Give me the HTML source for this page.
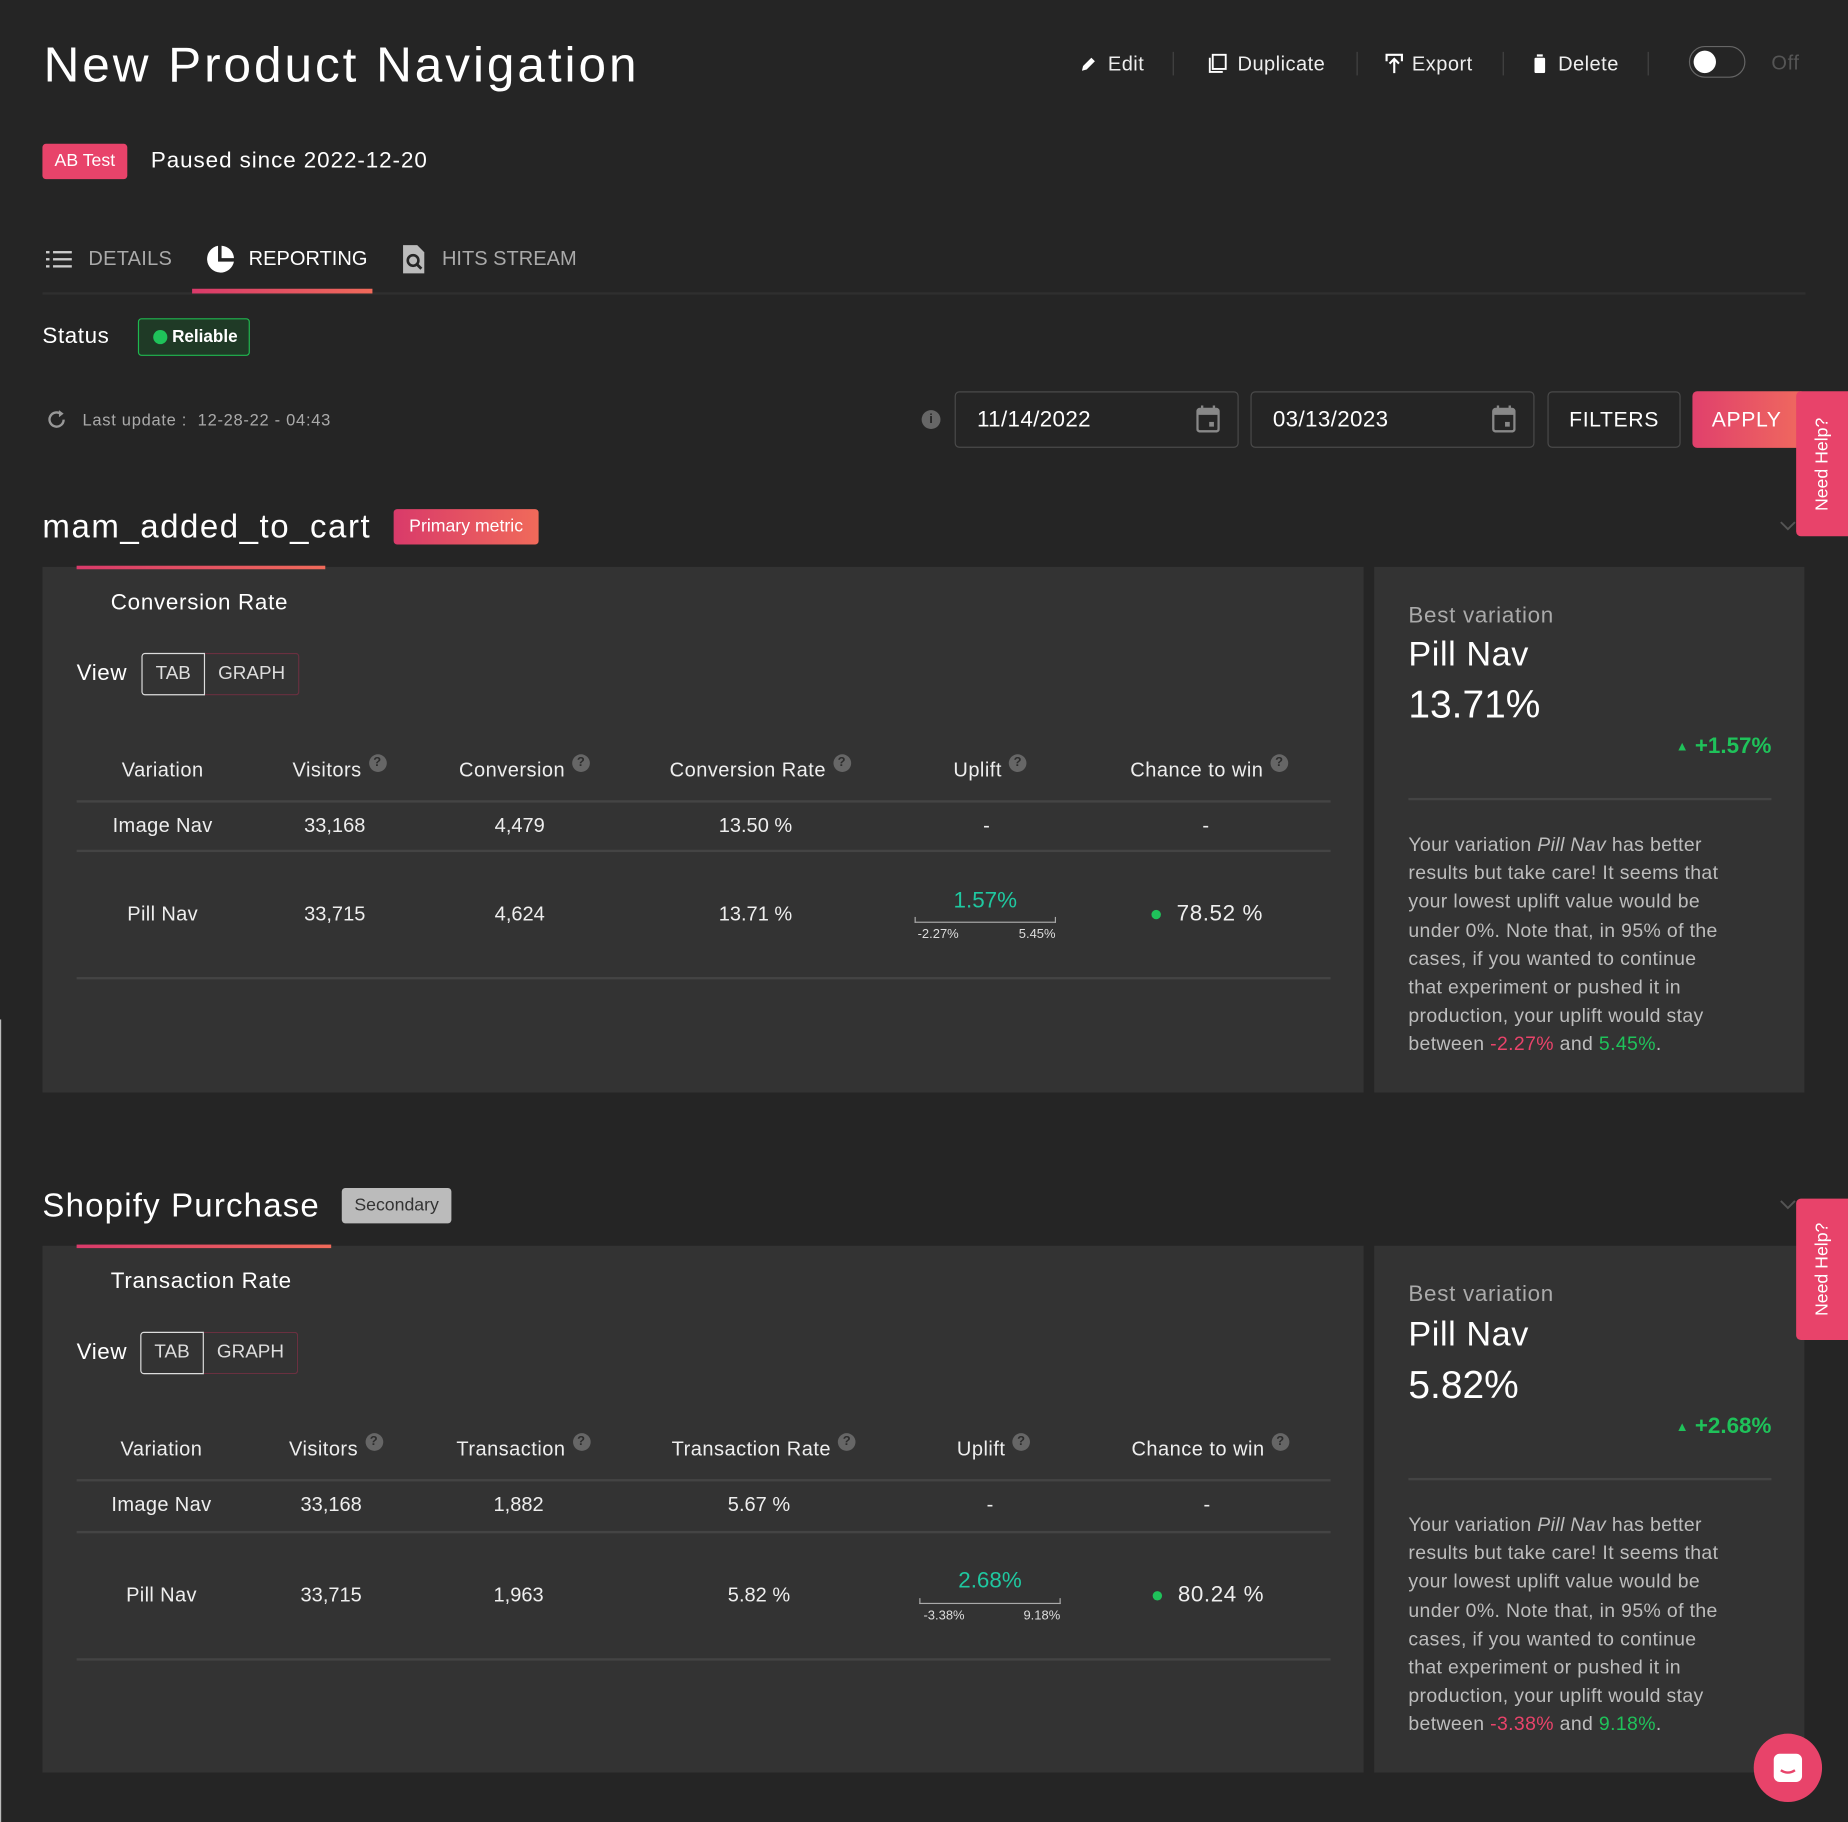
<!DOCTYPE html>
<html><head><meta charset="utf-8"><style>
html,body{margin:0;padding:0;background:#252525;overflow:hidden}
body{width:1848px;height:1822px}
#w{position:absolute;left:0;top:0;width:1568px;height:1546px;transform:scale(1.17857);transform-origin:0 0;font-family:"Liberation Sans",sans-serif;color:#eee;background:#252525}
.a{position:absolute;white-space:nowrap}
.c{position:absolute;white-space:nowrap;transform:translate(-50%,-50%)}
.m{transform:translateY(-50%)}
.q{display:inline-block;width:15px;height:15px;border-radius:50%;background:#666;color:#2c2c2c;font-size:11px;text-align:center;line-height:15px;font-weight:bold;vertical-align:top;margin-left:6px;margin-top:-4px}
.vd{position:absolute;width:1px;height:20px;background:#444;top:44px}
.panel{position:absolute;background:#333}
.hl{position:absolute;height:2px;background:#444}
.p{font-size:16.5px;line-height:24.2px;color:#bdbdbd;letter-spacing:.3px;white-space:nowrap}
.help{position:absolute;left:1524px;width:44px;background:#e8436a;border-radius:4px 0 0 4px}
.help span{position:absolute;left:50%;top:50%;transform:translate(-50%,-50%) rotate(-90deg);font-size:15px;color:#fff;white-space:nowrap}
</style></head><body><div id="w">
<div style="position:absolute;left:0;top:865px;width:1px;height:681px;background:#bbb"></div>
<div class="a m" style="left:37px;top:55px;font-size:42px;letter-spacing:2.5px;color:#fff">New Product Navigation</div>
<svg class="a" style="left:916px;top:47px" width="15" height="15" viewBox="0 0 15 15"><path d="M2 13l1-4 7-7 3 3-7 7z" fill="#fff"/></svg>
<div class="a m" style="left:940px;top:55px;font-size:17px;letter-spacing:.4px">Edit</div>
<div class="vd" style="left:995px"></div>
<svg class="a" style="left:1025px;top:45px" width="17" height="18" viewBox="0 0 17 18"><rect x="4" y="1.5" width="11" height="12" fill="none" stroke="#fff" stroke-width="1.6"/><path d="M1.5 4v12h11" fill="none" stroke="#fff" stroke-width="1.6"/></svg>
<div class="a m" style="left:1050px;top:55px;font-size:17px;letter-spacing:.4px">Duplicate</div>
<div class="vd" style="left:1151px"></div>
<svg class="a" style="left:1175px;top:45px" width="16" height="18" viewBox="0 0 16 18"><path d="M1.5 7V1.5h13V7M8 17V5M4 9l4-4 4 4" fill="none" stroke="#fff" stroke-width="1.8"/></svg>
<div class="a m" style="left:1198px;top:55px;font-size:17px;letter-spacing:.4px">Export</div>
<div class="vd" style="left:1275px"></div>
<svg class="a" style="left:1301px;top:46px" width="11" height="16" viewBox="0 0 11 16"><rect x="1" y="3" width="9" height="13" rx="1" fill="#fff"/><rect x="3" y="0" width="5" height="2" fill="#fff"/></svg>
<div class="a m" style="left:1322px;top:55px;font-size:17px;letter-spacing:.4px">Delete</div>
<div class="vd" style="left:1398px"></div>
<div class="a" style="left:1433px;top:39px;width:48px;height:27px;border:1.5px solid #666;border-radius:15px;box-sizing:border-box"></div>
<div class="a" style="left:1437px;top:43px;width:19px;height:19px;border-radius:50%;background:#fff"></div>
<div class="a m" style="left:1503px;top:54px;font-size:17px;color:#555;letter-spacing:.5px">Off</div>
<div class="a" style="left:36px;top:122px;width:72px;height:30px;background:#e8436a;border-radius:3px;font-size:15px;line-height:30px;text-align:center;color:#fff">AB Test</div>
<div class="a m" style="left:128px;top:137px;font-size:19px;color:#fff;letter-spacing:.8px">Paused since 2022-12-20</div>
<svg class="a" style="left:39px;top:212px" width="22" height="16" viewBox="0 0 22 16"><g fill="#ccc"><rect x="0" y="1" width="3" height="2"/><rect x="0" y="7" width="3" height="2"/><rect x="0" y="13" width="3" height="2"/><rect x="6" y="1" width="16" height="2"/><rect x="6" y="7" width="16" height="2"/><rect x="6" y="13" width="16" height="2"/></g></svg>
<div class="a m" style="left:75px;top:220px;font-size:17px;color:#aaa;letter-spacing:.2px">DETAILS</div>
<svg class="a" style="left:174px;top:207px" width="26" height="26" viewBox="0 0 26 26"><path d="M11 1.5A11.5 11.5 0 1 0 24.5 15H11z" fill="#fff"/><path d="M14 1.5A11 11 0 0 1 24.5 12H14z" fill="#fff"/></svg>
<div class="a m" style="left:211px;top:220px;font-size:17px;color:#fff;letter-spacing:0">REPORTING</div>
<svg class="a" style="left:341px;top:207px" width="20" height="26" viewBox="0 0 20 26"><path d="M1 1h12l6 6v18H1z" fill="#bbb"/><circle cx="9.5" cy="14" r="4.5" fill="none" stroke="#252525" stroke-width="2.2"/><path d="M12.5 17l4 4" stroke="#252525" stroke-width="2.4"/></svg>
<div class="a m" style="left:375px;top:220px;font-size:17px;color:#aaa;letter-spacing:0">HITS STREAM</div>
<div class="a" style="left:36px;top:248px;width:1496px;height:2px;background:#2f2f2f"></div>
<div class="a" style="left:163px;top:245px;width:153px;height:4px;background:linear-gradient(90deg,#d93a6a,#f06a5a)"></div>
<div class="a m" style="left:36px;top:286px;font-size:19px;color:#fff;letter-spacing:.5px">Status</div>
<div class="a" style="left:117px;top:270px;width:95px;height:32px;box-sizing:border-box;border:1.5px solid #1fb84f;background:#1f3a26;border-radius:3px"></div>
<div class="a" style="left:130px;top:280px;width:12px;height:12px;border-radius:50%;background:#1fc25a"></div>
<div class="a m" style="left:146px;top:286px;font-size:14.5px;font-weight:bold;color:#fff">Reliable</div>
<svg class="a" style="left:39px;top:347px" width="18" height="18" viewBox="0 0 18 18"><path d="M15 9a6 6 0 1 1-2-4.5" fill="none" stroke="#999" stroke-width="2"/><path d="M11 1l4 3-4 3z" fill="#999"/></svg>
<div class="a m" style="left:70px;top:356px;font-size:14px;color:#aaa;letter-spacing:.6px">Last update :&nbsp; 12-28-22 - 04:43</div>
<div class="a" style="left:782px;top:348px;width:16px;height:16px;border-radius:50%;background:#666;color:#252525;font-size:11px;font-weight:bold;text-align:center;line-height:16px">i</div>
<div class="a" style="left:810px;top:332px;width:241px;height:48px;box-sizing:border-box;border:1px solid #4a4a4a;border-radius:4px"></div>
<div class="a m" style="left:829px;top:357px;font-size:19px;color:#fff;letter-spacing:.3px">11/14/2022</div>
<svg class="a" style="left:1015px;top:344px" width="20" height="23" viewBox="0 0 20 23"><rect x="1" y="3" width="18" height="19" rx="2" fill="none" stroke="#888" stroke-width="2"/><rect x="1" y="3" width="18" height="5" fill="#888"/><rect x="4" y="0" width="2" height="4" fill="#888"/><rect x="14" y="0" width="2" height="4" fill="#888"/><rect x="11" y="14" width="4" height="4" fill="#888"/></svg>
<div class="a" style="left:1061px;top:332px;width:241px;height:48px;box-sizing:border-box;border:1px solid #4a4a4a;border-radius:4px"></div>
<div class="a m" style="left:1080px;top:357px;font-size:19px;color:#fff;letter-spacing:.3px">03/13/2023</div>
<svg class="a" style="left:1266px;top:344px" width="20" height="23" viewBox="0 0 20 23"><rect x="1" y="3" width="18" height="19" rx="2" fill="none" stroke="#888" stroke-width="2"/><rect x="1" y="3" width="18" height="5" fill="#888"/><rect x="4" y="0" width="2" height="4" fill="#888"/><rect x="14" y="0" width="2" height="4" fill="#888"/><rect x="11" y="14" width="4" height="4" fill="#888"/></svg>
<div class="a" style="left:1313px;top:332px;width:113px;height:48px;box-sizing:border-box;border:1px solid #4a4a4a;border-radius:4px;font-size:18px;line-height:46px;text-align:center;color:#fff;letter-spacing:.5px">FILTERS</div>
<div class="a" style="left:1436px;top:332px;width:96px;height:48px;background:linear-gradient(90deg,#e0406c,#f06a5e);border-radius:4px;font-size:18px;line-height:48px;text-align:center;color:#fff;letter-spacing:.5px;padding-right:4px;box-sizing:border-box">APPLY</div>
<div class="help" style="top:332px;height:123px"><span>Need Help?</span></div>

<div class="a m" style="left:36px;top:447px;font-size:28px;color:#fff;letter-spacing:1.3px">mam_added_to_cart</div>
<div class="a" style="left:334px;top:432px;width:123px;height:30px;background:linear-gradient(90deg,#d93a6a,#f06a5a);border-radius:3px;font-size:15px;line-height:30px;text-align:center;color:#fff">Primary metric</div>
<svg class="a" style="left:1510px;top:442px" width="14" height="9" viewBox="0 0 14 9"><path d="M1 1l6 6 6-6" fill="none" stroke="#555" stroke-width="1.6"/></svg>
<div class="panel" style="left:36px;top:481px;width:1121px;height:446px"></div>
<div class="panel" style="left:1166px;top:481px;width:365px;height:446px"></div>
<div class="a" style="left:65px;top:480px;width:211px;height:3px;background:linear-gradient(90deg,#d93a6a,#f06a5a)"></div>
<div class="a m" style="left:94px;top:512px;font-size:19px;color:#fff;letter-spacing:.6px">Conversion Rate</div>
<div class="a m" style="left:65px;top:572px;font-size:19px;color:#fff;letter-spacing:.5px">View</div>
<div class="a" style="left:120px;top:554px;width:54px;height:36px;box-sizing:border-box;border:1.5px solid #ddd;border-radius:3px 0 0 3px;font-size:16px;line-height:33px;text-align:center;color:#ddd">TAB</div>
<div class="a" style="left:174px;top:554px;width:80px;height:36px;box-sizing:border-box;border:1.5px solid #6a3040;border-left:none;border-radius:0 3px 3px 0;font-size:16px;line-height:33px;text-align:center;color:#ddd">GRAPH</div>
<div class="c" style="left:138px;top:654px;font-size:17px;letter-spacing:.4px">Variation</div>
<div class="c" style="left:288px;top:654px;font-size:17px;letter-spacing:.4px">Visitors<span class="q">?</span></div>
<div class="c" style="left:445px;top:654px;font-size:17px;letter-spacing:.4px">Conversion<span class="q">?</span></div>
<div class="c" style="left:645px;top:654px;font-size:17px;letter-spacing:.4px">Conversion Rate<span class="q">?</span></div>
<div class="c" style="left:840px;top:654px;font-size:17px;letter-spacing:.4px">Uplift<span class="q">?</span></div>
<div class="c" style="left:1026px;top:654px;font-size:17px;letter-spacing:.4px">Chance to win<span class="q">?</span></div>
<div class="hl" style="left:65px;top:679px;width:1064px"></div>
<div class="c" style="left:138px;top:701px;font-size:17px;letter-spacing:.3px">Image Nav</div>
<div class="c" style="left:284px;top:701px;font-size:17px">33,168</div>
<div class="c" style="left:441px;top:701px;font-size:17px">4,479</div>
<div class="c" style="left:641px;top:701px;font-size:17px">13.50 %</div>
<div class="c" style="left:837px;top:701px;font-size:17px">-</div>
<div class="c" style="left:1023px;top:701px;font-size:17px">-</div>
<div class="hl" style="left:65px;top:721px;width:1064px"></div>
<div class="c" style="left:138px;top:776px;font-size:17px;letter-spacing:.3px">Pill Nav</div>
<div class="c" style="left:284px;top:776px;font-size:17px">33,715</div>
<div class="c" style="left:441px;top:776px;font-size:17px">4,624</div>
<div class="c" style="left:641px;top:776px;font-size:17px">13.71 %</div>
<div class="c" style="left:836px;top:765px;font-size:19px;color:#1fc8a0">1.57%</div>
<div class="a" style="left:776px;top:778px;width:120px;height:5px;border:1px solid #aaa;border-top:none;box-sizing:border-box"></div>
<div class="c" style="left:796px;top:793px;font-size:11px;color:#ddd">-2.27%</div>
<div class="c" style="left:880px;top:793px;font-size:11px;color:#ddd">5.45%</div>
<div class="a" style="left:977px;top:772px;width:8px;height:8px;border-radius:50%;background:#1fc25a"></div>
<div class="c" style="left:1035px;top:776px;font-size:19px;letter-spacing:.5px">78.52 %</div>
<div class="hl" style="left:65px;top:829px;width:1064px"></div>
<div class="a m" style="left:1195px;top:523px;font-size:19px;color:#aaa;letter-spacing:.6px">Best variation</div>
<div class="a m" style="left:1195px;top:556px;font-size:29px;color:#fff;letter-spacing:.5px">Pill Nav</div>
<div class="a m" style="left:1195px;top:598px;font-size:33px;color:#fff">13.71%</div>
<div class="a m" style="right:65px;top:634px;font-size:19px;font-weight:bold;color:#1fc25a"><span style="font-size:11px;vertical-align:middle">▲</span> +1.57%</div>
<div class="hl" style="left:1195px;top:677px;width:308px;background:#444"></div>
<div class="a p" style="left:1195px;top:705px">Your variation <i>Pill Nav</i> has better<br>results but take care! It seems that<br>your lowest uplift value would be<br>under 0%. Note that, in 95% of the<br>cases, if you wanted to continue<br>that experiment or pushed it in<br>production, your uplift would stay<br>between <span style="color:#e8436a">-2.27%</span> and <span style="color:#1fc25a">5.45%</span>.</div>

<div class="a m" style="left:36px;top:1023px;font-size:28px;color:#fff;letter-spacing:1px">Shopify Purchase</div>
<div class="a" style="left:290px;top:1008px;width:93px;height:30px;background:#bbb;border-radius:3px;font-size:15px;line-height:30px;text-align:center;color:#333">Secondary</div>
<svg class="a" style="left:1510px;top:1018px" width="14" height="9" viewBox="0 0 14 9"><path d="M1 1l6 6 6-6" fill="none" stroke="#555" stroke-width="1.6"/></svg>
<div class="panel" style="left:36px;top:1057px;width:1121px;height:447px"></div>
<div class="panel" style="left:1166px;top:1057px;width:365px;height:447px"></div>
<div class="a" style="left:65px;top:1056px;width:216px;height:3px;background:linear-gradient(90deg,#d93a6a,#f06a5a)"></div>
<div class="help" style="top:1017px;height:120px"><span>Need Help?</span></div>
<div class="a m" style="left:94px;top:1088px;font-size:19px;color:#fff;letter-spacing:.6px">Transaction Rate</div>
<div class="a m" style="left:65px;top:1148px;font-size:19px;color:#fff;letter-spacing:.5px">View</div>
<div class="a" style="left:119px;top:1130px;width:54px;height:36px;box-sizing:border-box;border:1.5px solid #ddd;border-radius:3px 0 0 3px;font-size:16px;line-height:33px;text-align:center;color:#ddd">TAB</div>
<div class="a" style="left:173px;top:1130px;width:80px;height:36px;box-sizing:border-box;border:1.5px solid #6a3040;border-left:none;border-radius:0 3px 3px 0;font-size:16px;line-height:33px;text-align:center;color:#ddd">GRAPH</div>
<div class="c" style="left:137px;top:1230px;font-size:17px;letter-spacing:.4px">Variation</div>
<div class="c" style="left:285px;top:1230px;font-size:17px;letter-spacing:.4px">Visitors<span class="q">?</span></div>
<div class="c" style="left:444px;top:1230px;font-size:17px;letter-spacing:.4px">Transaction<span class="q">?</span></div>
<div class="c" style="left:648px;top:1230px;font-size:17px;letter-spacing:.4px">Transaction Rate<span class="q">?</span></div>
<div class="c" style="left:843px;top:1230px;font-size:17px;letter-spacing:.4px">Uplift<span class="q">?</span></div>
<div class="c" style="left:1027px;top:1230px;font-size:17px;letter-spacing:.4px">Chance to win<span class="q">?</span></div>
<div class="hl" style="left:65px;top:1255px;width:1064px"></div>
<div class="c" style="left:137px;top:1277px;font-size:17px;letter-spacing:.3px">Image Nav</div>
<div class="c" style="left:281px;top:1277px;font-size:17px">33,168</div>
<div class="c" style="left:440px;top:1277px;font-size:17px">1,882</div>
<div class="c" style="left:644px;top:1277px;font-size:17px">5.67 %</div>
<div class="c" style="left:840px;top:1277px;font-size:17px">-</div>
<div class="c" style="left:1024px;top:1277px;font-size:17px">-</div>
<div class="hl" style="left:65px;top:1299px;width:1064px"></div>
<div class="c" style="left:137px;top:1354px;font-size:17px;letter-spacing:.3px">Pill Nav</div>
<div class="c" style="left:281px;top:1354px;font-size:17px">33,715</div>
<div class="c" style="left:440px;top:1354px;font-size:17px">1,963</div>
<div class="c" style="left:644px;top:1354px;font-size:17px">5.82 %</div>
<div class="c" style="left:840px;top:1342px;font-size:19px;color:#1fc8a0">2.68%</div>
<div class="a" style="left:780px;top:1356px;width:120px;height:5px;border:1px solid #aaa;border-top:none;box-sizing:border-box"></div>
<div class="c" style="left:801px;top:1371px;font-size:11px;color:#ddd">-3.38%</div>
<div class="c" style="left:884px;top:1371px;font-size:11px;color:#ddd">9.18%</div>
<div class="a" style="left:978px;top:1350px;width:8px;height:8px;border-radius:50%;background:#1fc25a"></div>
<div class="c" style="left:1036px;top:1354px;font-size:19px;letter-spacing:.5px">80.24 %</div>
<div class="hl" style="left:65px;top:1407px;width:1064px"></div>
<div class="a m" style="left:1195px;top:1099px;font-size:19px;color:#aaa;letter-spacing:.6px">Best variation</div>
<div class="a m" style="left:1195px;top:1133px;font-size:29px;color:#fff;letter-spacing:.5px">Pill Nav</div>
<div class="a m" style="left:1195px;top:1175px;font-size:33px;color:#fff">5.82%</div>
<div class="a m" style="right:65px;top:1211px;font-size:19px;font-weight:bold;color:#1fc25a"><span style="font-size:11px;vertical-align:middle">▲</span> +2.68%</div>
<div class="hl" style="left:1195px;top:1254px;width:308px;background:#444"></div>
<div class="a p" style="left:1195px;top:1282px">Your variation <i>Pill Nav</i> has better<br>results but take care! It seems that<br>your lowest uplift value would be<br>under 0%. Note that, in 95% of the<br>cases, if you wanted to continue<br>that experiment or pushed it in<br>production, your uplift would stay<br>between <span style="color:#e8436a">-3.38%</span> and <span style="color:#1fc25a">9.18%</span>.</div>
<div class="a" style="left:1488px;top:1471px;width:58px;height:58px;border-radius:50%;background:#e8436a"></div>
<svg class="a" style="left:1503px;top:1486px" width="28" height="28" viewBox="0 0 28 28"><rect x="2" y="2" width="24" height="24" rx="5" fill="#fff"/><path d="M8 16q6 4 12 0" fill="none" stroke="#e8436a" stroke-width="2"/></svg>
</div></body></html>
